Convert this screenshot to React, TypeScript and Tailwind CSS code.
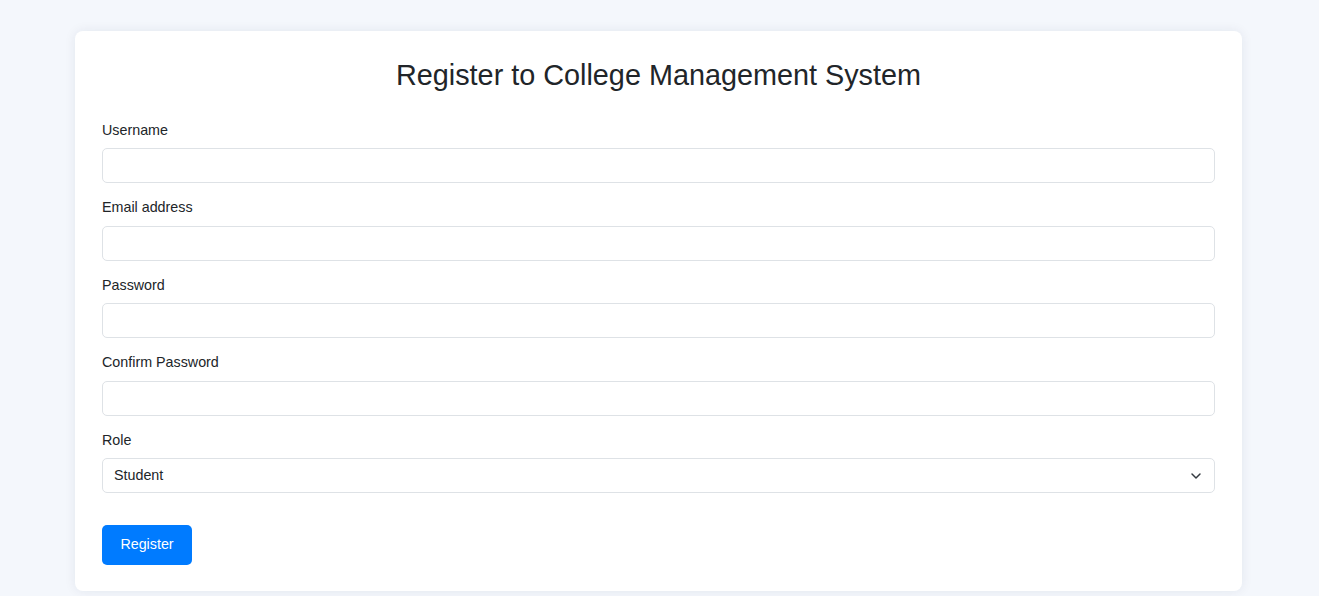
import { ChevronDown } from "lucide-react";

const fields = [
  { label: "Username", type: "text" },
  { label: "Email address", type: "email" },
  { label: "Password", type: "password" },
  { label: "Confirm Password", type: "password" },
];

export default function App() {
  return (
    <div
      className="min-h-screen bg-[#f4f7fc] pt-[31px] pb-[5px]"
      style={{ fontFamily: '"Liberation Sans", Arial, sans-serif' }}
    >
      <div className="ml-[75px] w-[1167px] rounded-lg bg-white px-[27px] pt-[27px] pb-[26px] shadow-[0_0_12px_rgba(20,40,80,0.08)]">
        <h1 className="mb-[26.5px] text-center text-[28.8px] leading-[35px] text-[#212529]">
          Register to College Management System
        </h1>

        <form className="flex flex-col" onSubmit={(e) => e.preventDefault()}>
          {fields.map((f) => (
            <div key={f.label} className="mb-[14px] flex flex-col">
              <label className="mb-[7.5px] text-[14.3px] leading-[21px] text-[#212529]">{f.label}</label>
              <input
                type={f.type}
                className="h-[35px] rounded-[5px] border border-[#dee2e6] bg-white px-3 text-[14px] outline-none"
              />
            </div>
          ))}

          <div className="flex flex-col">
            <label className="mb-[7.5px] text-[14.3px] leading-[21px] text-[#212529]">Role</label>
            <div className="relative">
              <select className="h-[35px] w-full appearance-none rounded-[5px] border border-[#dee2e6] bg-white px-[11px] text-[14.3px] text-[#212529] outline-none">
                <option>Student</option>
                <option>Faculty</option>
                <option>Admin</option>
              </select>
              <ChevronDown
                className="pointer-events-none absolute right-[11px] top-1/2 h-4 w-4 -translate-y-1/2 text-[#343a40]"
                strokeWidth={2.2}
              />
            </div>
          </div>

          <div className="mt-[32px]">
            <button
              type="submit"
              className="h-[40px] w-[90px] rounded-[5px] bg-[#007bff] text-[14.3px] text-white"
            >
              Register
            </button>
          </div>
        </form>
      </div>
    </div>
  );
}
